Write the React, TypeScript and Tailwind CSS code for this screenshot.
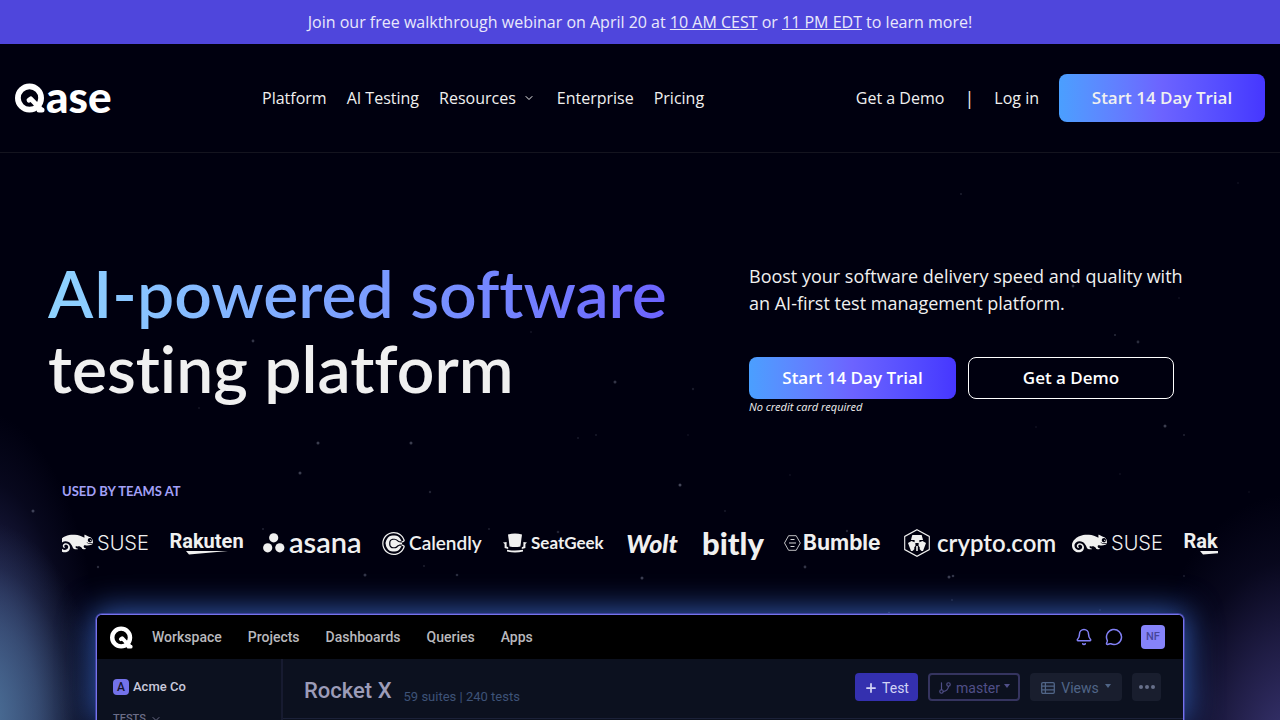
import type { ReactNode } from "react";
import { SiSuse, SiCalendly } from "react-icons/si";
import { Bell, ChevronDown, GitBranch, MessageCircle, Plus } from "lucide-react";

const STARS: [number, number, number, number][] = [
  [253, 341, 1.4, 0.3], [531, 332, 1, 0.12], [615, 382, 1.5, 0.3], [693, 389, 1.2, 0.15],
  [199, 408, 0.8, 0.2], [318, 443, 1.5, 0.35], [411, 443, 1.5, 0.35], [578, 438, 1, 0.15],
  [596, 435, 1, 0.15], [688, 435, 0.8, 0.15], [300, 473, 1.5, 0.35], [430, 492, 1.2, 0.2],
  [680, 485, 1.5, 0.4], [790, 475, 0.8, 0.15], [33, 511, 1.5, 0.35], [725, 511, 1, 0.15],
  [263, 529, 1, 0.2], [489, 529, 0.9, 0.2], [558, 532, 1.3, 0.2], [847, 531, 1.2, 0.2],
  [98, 567, 1.2, 0.25], [365, 575, 1.5, 0.3], [424, 566, 0.9, 0.2], [457, 575, 1.3, 0.25],
  [642, 578, 1.5, 0.35], [805, 567, 1.4, 0.3], [949, 577, 1.5, 0.35], [953, 576, 1.3, 0.3],
  [1073, 286, 1.4, 0.3], [1031, 289, 0.8, 0.2], [1179, 298, 0.8, 0.15], [1115, 335, 1, 0.25],
  [1138, 342, 1.4, 0.25], [1165, 426, 1.5, 0.35], [1184, 435, 1, 0.2], [1036, 427, 0.8, 0.15],
  [961, 194, 0.9, 0.2], [1238, 183, 0.8, 0.15], [952, 600, 0.9, 0.2], [1100, 610, 0.9, 0.2],
  [889, 613, 1.2, 0.3], [1184, 576, 0.9, 0.2], [1120, 474, 0.8, 0.15], [1249, 492, 0.8, 0.12],
];

function QMark({ className }: { className?: string }) {
  return (
    <svg viewBox="0 0 30 30" className={className} fill="none" stroke="currentColor" aria-hidden="true">
      <circle cx="14.5" cy="15" r="11.6" strokeWidth="5.8" />
      <path d="M14 17.2 15.8 15.8 25.6 26" strokeWidth="4.8" strokeLinecap="round" strokeLinejoin="round" />
      <path d="M24 27h3" strokeWidth="5" strokeLinecap="round" />
    </svg>
  );
}

function Suse() {
  return (
    <div className="flex w-[92px] shrink-0 items-center gap-1">
      <SiSuse className="size-[35px] shrink-0" aria-hidden="true" />
      <span className="font-['Inter',sans-serif] text-xl leading-6 font-light">SUSE</span>
    </div>
  );
}

function Rakuten() {
  return (
    <div className="flex w-[73px] shrink-0 flex-col items-center">
      <span className="font-['Roboto',sans-serif] text-xl leading-5 font-bold">Rakuten</span>
      <svg viewBox="0 0 42 4" className="h-1 w-[42px]" fill="currentColor" aria-hidden="true">
        <path d="M0 0h42L3 3.6z" />
      </svg>
    </div>
  );
}

function Asana() {
  return (
    <div className="flex w-[99px] shrink-0 items-center gap-1">
      <svg viewBox="0 0 22 20" className="h-5 w-[22px] shrink-0" fill="currentColor" aria-hidden="true">
        <circle cx="10.7" cy="4.8" r="4.6" />
        <circle cx="4.7" cy="14.8" r="4.6" />
        <circle cx="16.8" cy="14.8" r="4.6" />
      </svg>
      <span className="pb-0.5 font-['Lato',sans-serif] text-[29px] leading-6 font-semibold">asana</span>
    </div>
  );
}

function Calendly() {
  return (
    <div className="flex w-[101px] shrink-0 items-center gap-1">
      <SiCalendly className="size-[23px] shrink-0" aria-hidden="true" />
      <span className="font-['Lato',sans-serif] text-[19px] leading-6 font-semibold">Calendly</span>
    </div>
  );
}

function SeatGeek() {
  return (
    <div className="flex w-[99px] shrink-0 items-center gap-1">
      <svg viewBox="0 0 24 20" className="h-5 w-6 shrink-0" fill="currentColor" aria-hidden="true">
        <path d="M5 1.6Q12 -0.6 19 1.6L17.4 13.6Q12 14.6 6.6 13.6z" />
        <path d="M0 9.6 3.6 9v4.6l1.6.6V16l-3.6-1v-4zM24 9.6 20.4 9v4.6l-1.6.6V16l3.6-1v-4z" />
        <path d="M4 16.8q8 1.6 16 0v1.8q-8 1.8-16 0z" />
      </svg>
      <span className="font-['Lato',sans-serif] text-[17px] leading-5 font-bold">SeatGeek</span>
    </div>
  );
}

function Bumble() {
  return (
    <div className="flex w-24 shrink-0 items-center gap-0.5">
      <svg viewBox="0 0 17 16" className="h-4 w-[17px] shrink-0" fill="none" stroke="currentColor" aria-hidden="true">
        <path d="M4.6.7h7.6L16.3 8l-4.1 7.3H4.6L.5 8z" strokeWidth="0.8" />
        <path d="M6.5 4.5h4M5 8h7M6.5 11.5h4" strokeWidth="0.9" />
      </svg>
      <span className="font-['Inter',sans-serif] text-[21px] leading-6 font-bold">Bumble</span>
    </div>
  );
}

function CryptoCom() {
  return (
    <div className="flex w-[152px] shrink-0 items-center gap-[7px] pl-1">
      <svg viewBox="0 0 26 28" className="h-7 w-[26px] shrink-0" fill="none" aria-hidden="true">
        <path d="M13 .7 25.3 7.4v13.2L13 27.3.7 20.6V7.4z" stroke="currentColor" strokeWidth="1.1" />
        <path fill="currentColor" d="M8.3 6h9.4L19 11H7z" />
        <path fill="currentColor" d="M4 14l3.5-2 3.8 1.5.2 3.2-1.2 1.6v2L8.5 22H7z" />
        <path fill="currentColor" d="M22 14l-3.5-2-3.8 1.5-.2 3.2 1.2 1.6v2l1.8 1.7H19z" />
        <path fill="currentColor" d="M10.6 11h4.800v3h-4.800zM12.2 17h1.6v5h-1.6z" />
      </svg>
      <span className="font-['Lato',sans-serif] text-2xl leading-6 font-semibold">crypto.com</span>
    </div>
  );
}

function NavLink({ children }: { children: ReactNode }) {
  return (
    <a href="#" className="flex items-center gap-[7px]">
      {children}
    </a>
  );
}

function Caret() {
  return (
    <svg viewBox="0 0 6 4" className="mb-1 h-1 w-1.5" fill="currentColor" aria-hidden="true">
      <path d="M0 0h6L3 4z" />
    </svg>
  );
}

function ListIcon() {
  return (
    <svg viewBox="0 0 14 12" className="h-3 w-3.5" fill="none" stroke="currentColor" strokeWidth="1.3" aria-hidden="true">
      <rect x="0.7" y="0.7" width="12.6" height="10.6" rx="1.2" />
      <path d="M4.4.7v10.600M.7 4.200h12.600M.7 7.800h12.600" />
    </svg>
  );
}

function AppPreview() {
  return (
    <section
      aria-label="Product preview"
      className="relative mx-24 flex min-h-0 flex-1 flex-col overflow-hidden rounded-t-md border border-b-0 border-[#7674ec] bg-[#0c111f] font-['Roboto',sans-serif] text-sm shadow-[0_0_0_1px_#3f44a0,0_0_32px_4px_#345bb0]"
    >
      <div className="flex h-11 shrink-0 items-center bg-black pr-[18px] pl-[13px] font-medium text-[#b9b9bd]">
        <QMark className="size-[23px] text-white" />
        <nav className="ml-[19px] flex gap-[26px]">
          <a href="#">Workspace</a>
          <a href="#">Projects</a>
          <a href="#">Dashboards</a>
          <a href="#">Queries</a>
          <a href="#">Apps</a>
        </nav>
        <div className="ml-auto flex items-center text-[#8280f5]">
          <button aria-label="Notifications" className="mr-3">
            <Bell className="size-[18px]" />
          </button>
          <button aria-label="Messages" className="mr-[18px]">
            <MessageCircle className="size-[18px]" />
          </button>
          <span className="flex size-6 items-center justify-center rounded bg-[#8583fa] text-[11px] text-[#47469a]">NF</span>
        </div>
      </div>
      <div className="flex min-h-[61px] flex-1">
        <aside className="w-[186px] shrink-0 border-r-2 border-[#171b30] pt-5 pl-4">
          <div className="flex items-center gap-1 text-[13px] leading-4 font-medium text-[#c9c9dc]">
            <span className="flex size-4 items-center justify-center rounded bg-[#7472ea] text-xs text-[#14142c]">A</span>
            Acme Co
          </div>
          <div className="mt-4 flex items-center gap-1 text-[11px] leading-4 font-medium text-[#6b6d87]">
            TESTS
            <ChevronDown className="size-3" />
          </div>
        </aside>
        <div className="flex-1">
          <div className="flex h-[60px] items-center border-b border-[#1b2138] pr-[22px] pl-[21px]">
            <div className="flex items-end gap-3 pt-1">
              <h2 className="text-[22px] leading-7 font-medium text-[#9c9cb8]">Rocket X</h2>
              <span className="text-[13px] leading-4 text-[#3e5378]">59 suites | 240 tests</span>
            </div>
            <div className="ml-auto flex gap-[10px] pb-1 text-sm">
              <button className="flex h-7 w-[63px] items-center justify-center gap-1 rounded bg-[#3430af] pt-0.5 text-[#d2d3f5]">
                <Plus className="size-[14px]" strokeWidth={3} />
                Test
              </button>
              <button className="flex h-7 w-[92px] items-center justify-center gap-1 rounded border-2 border-[#35345f] pt-0.5 text-[#504f88]">
                <GitBranch className="size-[14px]" />
                master
                <Caret />
              </button>
              <button className="flex h-7 w-[92px] items-center justify-center gap-1.5 rounded bg-[#191e2e] pt-0.5 text-[#506587]">
                <ListIcon />
                Views
                <Caret />
              </button>
              <button aria-label="More" className="flex h-7 w-[29px] items-center justify-center rounded bg-[#191e2e] text-[#67708a]">
                <svg viewBox="0 0 16 4" className="h-1 w-4" fill="currentColor" aria-hidden="true">
                  <circle cx="2" cy="2" r="2" />
                  <circle cx="8" cy="2" r="2" />
                  <circle cx="14" cy="2" r="2" />
                </svg>
              </button>
            </div>
          </div>
        </div>
      </div>
    </section>
  );
}

export default function App() {
  return (
    <div className="relative isolate flex h-screen flex-col overflow-hidden bg-[#00000f] font-['Open_Sans',sans-serif] text-[#f0f0f0]">
      <div
        aria-hidden="true"
        className="absolute inset-0 -z-10 bg-[radial-gradient(120px_200px_at_-20px_100%,#4d749a,#4d749a80_50%,#4d749a26_78%,#4d749a00),radial-gradient(125px_310px_at_-20px_100%,#33366e,#33366e99_45%,#33366e26_78%,#33366e00),radial-gradient(160px_270px_at_101%_106%,#3d3878,#3d387880_45%,#3d387822_75%,#3d387800)]"
      />
      <svg aria-hidden="true" viewBox="0 0 1280 720" className="absolute inset-0 -z-10 size-full" fill="#a9afc9">
        {STARS.map(([x, y, r, o]) => (
          <circle key={`${x}-${y}`} cx={x} cy={y} r={r} opacity={o} />
        ))}
      </svg>

      <p className="flex h-11 shrink-0 items-center justify-center bg-[#4f46dc] text-base text-[#e9e8fb]">
        <span>
          Join our free walkthrough webinar on April 20 at{" "}
          <a href="#" className="underline">10 AM CEST</a> or{" "}
          <a href="#" className="underline">11 PM EDT</a> to learn more!
        </span>
      </p>

      <header className="flex h-[109px] shrink-0 items-center border-b border-[#14141f] px-[15px] text-base">
        <a href="#" aria-label="Qase" className="flex w-[247px] items-center text-white">
          <QMark className="size-[30px]" />
          <span className="ml-px pb-1 font-['Lato',sans-serif] text-[44px] leading-[30px] font-black">ase</span>
        </a>
        <nav className="flex gap-5">
          <NavLink>Platform</NavLink>
          <NavLink>AI Testing</NavLink>
          <NavLink>
            Resources
            <ChevronDown className="mr-0.5 size-3" />
          </NavLink>
          <NavLink>Enterprise</NavLink>
          <NavLink>Pricing</NavLink>
        </nav>
        <div className="ml-auto flex items-center">
          <a href="#">Get a Demo</a>
          <span className="w-[50px] text-center text-lg leading-5">|</span>
          <a href="#">Log in</a>
          <a
            href="#"
            className="ml-5 flex h-12 w-[206px] items-center justify-center rounded-lg bg-linear-to-r from-[#4a9fff] via-[#6c63ff] to-[#4636ff] text-[17px] font-semibold"
          >
            Start 14 Day Trial
          </a>
        </div>
      </header>

      <main className="flex min-h-0 flex-1 flex-col">
        <div className="grid shrink-0 grid-cols-[701fr_483fr] px-12 pt-[102px]">
          <h1 className="font-['Lato',sans-serif] text-[66px] leading-[75px] font-semibold whitespace-nowrap [font-variant-ligatures:none]">
            <span className="bg-linear-to-r from-[#8fd3ff] to-[#6c63ff] bg-clip-text text-transparent">AI-powered software</span>
            <br />
            testing platform
          </h1>
          <div className="pt-2">
            <p className="text-lg leading-[27px]">
              Boost your software delivery speed and quality with
              <br />
              an AI-first test management platform.
            </p>
            <div className="mt-10 flex gap-3 text-[17px] font-semibold text-white">
              <a
                href="#"
                className="flex h-[42px] w-[207px] items-center justify-center rounded-lg bg-linear-to-r from-[#4a9fff] via-[#6c63ff] to-[#4636ff]"
              >
                Start 14 Day Trial
              </a>
              <a href="#" className="flex h-[42px] w-[206px] items-center justify-center rounded-lg border border-white">
                Get a Demo
              </a>
            </div>
            <p className="text-[11px] leading-4 italic">No credit card required</p>
          </div>
        </div>

        <div className="mt-[68px] shrink-0 px-[62px]">
          <h2 className="font-['Lato',sans-serif] text-[13px] leading-4 font-bold text-[#a3a0f8]">USED BY TEAMS AT</h2>
          <div className="mt-6 overflow-hidden">
            <div className="-ml-1 flex h-10 items-center gap-5">
              <Suse />
              <Rakuten />
              <Asana />
              <Calendly />
              <SeatGeek />
              <span className="w-[60px] shrink-0 text-center font-['Lato',sans-serif] text-[25px] leading-6 font-black italic">Wolt</span>
              <span className="w-[62px] shrink-0 text-center font-['Lato',sans-serif] text-[31px] leading-6 font-black">bitly</span>
              <Bumble />
              <CryptoCom />
              <Suse />
              <Rakuten />
            </div>
          </div>
        </div>

        <div className="mt-[51px] flex min-h-0 flex-1 flex-col">
          <AppPreview />
        </div>
      </main>
    </div>
  );
}
